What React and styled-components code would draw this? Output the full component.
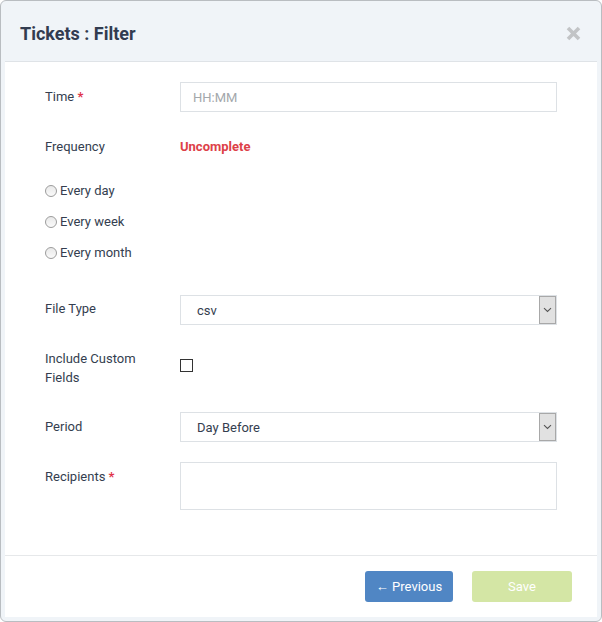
import React from "react";
import styled, { createGlobalStyle } from "styled-components";

const Global = createGlobalStyle`
  html, body { margin: 0; padding: 0; background: #fff; }
  body { font-family: Roboto, "Liberation Sans", Arial, sans-serif; }
  * { box-sizing: border-box; }
`;

const Modal = styled.div`
  width: 602px;
  height: 622px;
  border: 1px solid #b9bdc1;
  border-radius: 6px;
  background: #f0f4f8;
  display: flex;
  flex-direction: column;
  padding: 0 4px 4px 4px;
`;

const Header = styled.div`
  height: 60px;
  display: flex;
  align-items: center;
  justify-content: space-between;
  padding: 4px 16px 0 15px;
  h3 {
    margin: 0;
    font-size: 18px;
    font-weight: 700;
    color: #323c50;
  }
`;

const Close = styled.button`
  border: 0;
  background: none;
  padding: 0;
  width: 16px;
  height: 16px;
  display: flex;
  align-items: center;
  justify-content: center;
  cursor: pointer;
`;

const Body = styled.div`
  flex: 1;
  background: #fff;
  border-top: 1px solid #dfe3e7;
  display: flex;
  flex-direction: column;
`;

const Form = styled.div`
  flex: 1;
  padding: 20px 40px 0 40px;
  display: flex;
  flex-direction: column;
`;

const Row = styled.div`
  display: grid;
  grid-template-columns: 135px 1fr;
  align-items: start;
  margin-top: ${({ gap }) => gap || 0}px;
`;

const Label = styled.div`
  font-size: 13px;
  line-height: ${({ lh }) => lh || 20}px;
  color: #343e4f;
  padding-top: ${({ pt }) => pt || 0}px;
  span {
    color: #e0344a;
    font-weight: 700;
  }
`;

const Input = styled.input`
  height: 30px;
  width: 100%;
  border: 1px solid #dde1e5;
  padding: 0 12px;
  font-size: 13px;
  font-family: inherit;
  color: #343e4f;
  &::placeholder { color: #a3a7ab; }
  outline: none;
`;

const Textarea = styled.textarea`
  height: 48px;
  width: 100%;
  border: 1px solid #dde1e5;
  resize: none;
  outline: none;
  display: block;
  font-family: inherit;
`;

const Status = styled.div`
  font-size: 13px;
  line-height: 20px;
  font-weight: 700;
  color: #dd4148;
`;

const Radios = styled.div`
  margin-top: 24px;
  display: flex;
  flex-direction: column;
  gap: 11px;
`;

const Radio = styled.label`
  display: flex;
  align-items: center;
  font-size: 13px;
  line-height: 20px;
  color: #343e4f;
  gap: 3px;
  &::before {
    content: "";
    width: 10px;
    height: 10px;
    border-radius: 50%;
    border: 1px solid #9c9c9c;
    background: linear-gradient(#e9e9e9, #fafafa);
  }
`;

const Select = styled.div`
  height: 30px;
  border: 1px solid #dde1e5;
  display: flex;
  align-items: center;
  justify-content: space-between;
  padding: 0 0 0 16px;
  font-size: 13px;
  color: #343e4f;
`;

const Arrow = styled.div`
  width: 17px;
  height: 28px;
  background: #e1e1e1;
  border: 1px solid #a8a8a8;
  display: flex;
  align-items: center;
  justify-content: center;
`;

const Check = styled.div`
  width: 13px;
  height: 13px;
  border: 1px solid #333;
  margin-top: 10px;
`;

const Footer = styled.div`
  height: 62px;
  border-top: 1px solid #e6e8ea;
  display: flex;
  justify-content: flex-end;
  align-items: flex-start;
  gap: 19px;
  padding: 15px 25px 0 0;
`;

const Button = styled.button`
  height: 31px;
  width: ${({ w }) => w}px;
  border: 0;
  border-radius: 3px;
  background: ${({ bg }) => bg};
  color: #fff;
  font-family: inherit;
  font-size: 13px;
`;

const Chevron = () => (
  <svg width="9" height="6" viewBox="0 0 9 6">
    <path d="M1 1.2 L4.5 4.5 L8 1.2" fill="none" stroke="#555" strokeWidth="1.1" />
  </svg>
);

export default function App() {
  return (
    <>
      <Global />
      <Modal>
        <Header>
          <h3>Tickets : Filter</h3>
          <Close>
            <svg width="15" height="15" viewBox="0 0 15 15">
              <path d="M2 2 L13 13 M13 2 L2 13" stroke="#c2c4c6" strokeWidth="3.6" strokeLinecap="butt" />
            </svg>
          </Close>
        </Header>
        <Body>
          <Form>
            <Row>
              <Label pt={5}>
                Time <span>*</span>
              </Label>
              <Input placeholder="HH:MM" />
            </Row>
            <Row gap={25}>
              <Label>Frequency</Label>
              <Status>Uncomplete</Status>
            </Row>
            <Radios>
              <Radio>Every day</Radio>
              <Radio>Every week</Radio>
              <Radio>Every month</Radio>
            </Radios>
            <Row gap={32}>
              <Label pt={4}>File Type</Label>
              <Select>
                csv
                <Arrow>
                  <Chevron />
                </Arrow>
              </Select>
            </Row>
            <Row gap={24}>
              <Label lh={19}>
                Include Custom
                <br />
                Fields
              </Label>
              <Check />
            </Row>
            <Row gap={25}>
              <Label pt={5}>Period</Label>
              <Select>
                Day Before
                <Arrow>
                  <Chevron />
                </Arrow>
              </Select>
            </Row>
            <Row gap={20}>
              <Label pt={5}>
                Recipients <span>*</span>
              </Label>
              <Textarea />
            </Row>
          </Form>
          <Footer>
            <Button w={88} bg="#5086c4">← Previous</Button>
            <Button w={100} bg="#d4e6a5">Save</Button>
          </Footer>
        </Body>
      </Modal>
    </>
  );
}
